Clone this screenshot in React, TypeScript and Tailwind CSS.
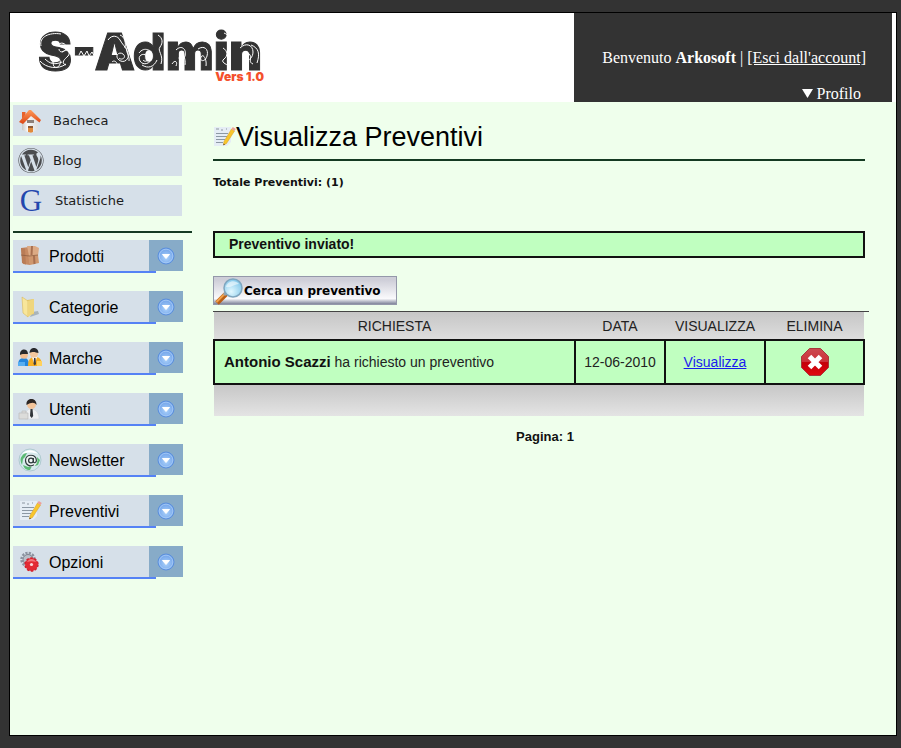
import { FaWordpress } from "react-icons/fa";
import type { ReactNode } from "react";

const sans = "font-['Liberation_Sans',Arial,sans-serif]";
const verdana = "font-['DejaVu_Sans',Verdana,sans-serif]";

function HomeIcon() {
  return (
    <svg width="24" height="24" viewBox="0 0 24 24" aria-hidden="true">
      <defs>
        <linearGradient id="roof" x1="0" y1="0" x2="0" y2="1">
          <stop offset="0" stopColor="#ff9a5a" />
          <stop offset="1" stopColor="#dc4412" />
        </linearGradient>
        <linearGradient id="wall" x1="0" y1="0" x2="1" y2="0">
          <stop offset="0" stopColor="#c9c7c4" />
          <stop offset=".35" stopColor="#f8f8f8" />
          <stop offset="1" stopColor="#dedede" />
        </linearGradient>
      </defs>
      <path d="M3 12 11 4l8 7v9.500L12 24l-9-3z" fill="url(#wall)" />
      <path d="M3 3h3.500v6H3z" fill="#e8622c" />
      <path d="M0 13 10 1h2l10 10-1.500 2.500L12 7l-8 8z" fill="url(#roof)" />
      <path d="M8 11h7v3H8z" fill="#8d8079" />
      <path d="M9 17h5v6l-2 .700-3-.7z" fill="#e08a3c" />
      <path d="M9 17h5v2H9z" fill="#8f5a34" />
    </svg>
  );
}

function BoxIcon() {
  return (
    <svg width="22" height="22" viewBox="0 0 22 22" aria-hidden="true">
      <path d="M2 3l8-1 1 18-7-1z" fill="#c78a62" />
      <path d="M2 3l4 .500 1 16-4-1.500z" fill="#b97c56" />
      <path d="M8 1h8l4 2-1 8h-9z" fill="#dcaa84" />
      <path d="M9 11l10-1 1 8-9 2z" fill="#cf976e" />
      <path d="M12 1l2 0-.5 9h-2zM14 11l2-.200.500 8-2 .400z" fill="#a87050" />
      <path d="M2 10l8 1 9-1" fill="none" stroke="#8a5a3e" strokeWidth=".7" />
    </svg>
  );
}

function FolderIcon() {
  return (
    <svg width="22" height="22" viewBox="0 0 22 22" aria-hidden="true">
      <path d="M13 16l6-1 1 3-9 3z" fill="#a9b4ba" />
      <path d="M8 4l7-1v15l-7 1z" fill="#e2c566" />
      <path d="M3 1l6 4v16l-5-4z" fill="#f8e69a" stroke="#d8b95a" strokeWidth=".6" />
      <path d="M9 5l6-2v14l-6 4z" fill="#efd67e" />
    </svg>
  );
}

function PeopleIcon() {
  return (
    <svg width="26" height="20" viewBox="0 0 26 20" aria-hidden="true">
      <path d="M1 18c0-6 2-8 6-8s5 3 5 8z" fill="#2385dc" />
      <circle cx="7" cy="7" r="3.800" fill="#f1bd91" />
      <path d="M3 7c-.5-7 8-7 8-1-3 .500-5-1-8 1z" fill="#28292c" />
      <path d="M11 18c0-6 2-9 7-9s7 3 7 9z" fill="#f6ae22" />
      <path d="M15 9h5l-2.500 8z" fill="#fff" />
      <path d="M17 10h1.500l.500 6-1.200 1.500L16.500 16z" fill="#3c3c3c" />
      <circle cx="17" cy="5.500" r="4.200" fill="#f3c79d" />
      <path d="M12.500 5c0-7 9-6.500 9 0-3-.5-5-2-9 0z" fill="#28292c" />
      <path d="M1 14h7v4H1z" fill="#56aef2" />
      <path d="M20 13h5v5h-5z" fill="#ffd15c" />
    </svg>
  );
}

function UserIcon() {
  return (
    <svg width="24" height="22" viewBox="0 0 24 22" aria-hidden="true">
      <path d="M7 21c0-7 2-10 6-10s8 3 8 10z" fill="#eef0f2" stroke="#ccd0d4" strokeWidth=".5" />
      <path d="M12.500 11h2l.700 7-1.500 2-1.700-2z" fill="#33363a" />
      <circle cx="13.500" cy="6.500" r="4.500" fill="#f3c49a" />
      <path d="M8.500 7C7.500-1 19-1 18.500 7c-2-3-5-3-10 0z" fill="#2c2624" />
      <path d="M1 15h9v6H1zM4 15v-2h4v2" fill="#dcdcda" stroke="#bbb" strokeWidth=".7" />
    </svg>
  );
}

function MailIcon() {
  return (
    <svg width="24" height="24" viewBox="0 0 24 24" aria-hidden="true">
      <circle cx="12" cy="12" r="11" fill="#d5e9ec" stroke="#9dbdc3" strokeWidth=".7" />
      <path d="M4 8c1-2 3-3 5-3l-2 4-2 2-1 6C2 13 2 10 4 8zM19 9l3 3-2 5-3 1zM5 17l5 2 4-1-2 4C8 22 6 20 5 17z" fill="#5cba74" />
      <path d="M4 6c4-5 12-5 16 0-5-2-11-2-16 0z" fill="#fff" />
      <circle cx="13" cy="12.500" r="6.500" fill="#f2f5f5" opacity=".85" />
      <circle cx="13" cy="12.500" r="2.400" fill="none" stroke="#303c3e" strokeWidth="1.300" />
      <path d="M15.400 10v3.500c0 2 3 1.500 3-1 0-7-10.900-7-10.900 0 0 5 5 6.500 8.500 4.300" fill="none" stroke="#303c3e" strokeWidth="1.200" />
    </svg>
  );
}

function NoteIcon() {
  return (
    <svg width="23" height="22" viewBox="0 0 23 22" aria-hidden="true">
      <path d="M1 1h17v15l-4 4H1z" fill="#e5edf5" />
      <path d="M3 3h3M8 4h2M13 3h1" stroke="#8b95a0" />
      <path d="M3 7.500h12M3 10.500h11M3 13.500h9M3 16.500h7" stroke="#8c98a4" strokeWidth="1.100" />
      <path d="M18.500 3l3 2-8 12.500-3 1.500.500-3.500z" fill="#f8c62c" stroke="#d89c1c" strokeWidth=".5" />
      <path d="M18.500 3l1.300-2 3 2-1.300 2z" fill="#eda09a" />
      <path d="M10.600 17.500l-.2 1.700 1.600-.8z" fill="#4d3c26" />
    </svg>
  );
}

function GearIcon() {
  return (
    <svg width="22" height="22" viewBox="0 0 22 22" aria-hidden="true">
      <circle cx="9" cy="8.500" r="6.500" fill="none" stroke="#8c93a0" strokeWidth="2.500" strokeDasharray="2.200 1.200" />
      <circle cx="9" cy="8.500" r="5" fill="#b9bec8" stroke="#7c828e" />
      <circle cx="12.500" cy="13.500" r="6.400" fill="#e32a34" />
      <circle cx="12.500" cy="13.500" r="6.500" fill="none" stroke="#d31f2b" strokeWidth="1.400" strokeDasharray="2.500 1.580" />
      <path d="M8 11c2-4 7-4 9 0-3-1-6-1-9 0z" fill="#f4777c" />
      <circle cx="12.500" cy="13.500" r="1.600" fill="#f9dadb" />
    </svg>
  );
}

function ArrowIcon() {
  return (
    <svg width="18" height="18" viewBox="0 0 18 18" aria-hidden="true">
      <defs>
        <radialGradient id="orb" cx=".5" cy=".6" r=".6">
          <stop offset="0" stopColor="#a9d0fa" />
          <stop offset="1" stopColor="#6c9fe8" />
        </radialGradient>
      </defs>
      <circle cx="9" cy="9" r="8" fill="url(#orb)" stroke="#5b8fdc" />
      <circle cx="9" cy="9" r="6.800" fill="none" stroke="#a8cbf6" strokeWidth=".8" />
      <path d="M5.500 7.500h7L9 11.500z" fill="#fff" stroke="#fff" strokeLinejoin="round" />
    </svg>
  );
}

function LensIcon() {
  return (
    <svg width="30" height="28" viewBox="0 0 30 28" aria-hidden="true">
      <defs>
        <radialGradient id="lens" cx=".4" cy=".7" r=".7">
          <stop offset="0" stopColor="#e2f8ff" />
          <stop offset="1" stopColor="#83c8ea" />
        </radialGradient>
      </defs>
      <path d="M3 26l9-9" stroke="#b95f17" strokeWidth="5" />
      <path d="M2.500 25l9-9" stroke="#f0a04a" strokeWidth="2" />
      <path d="M10 18l3-3" stroke="#9aa2aa" strokeWidth="3" />
      <circle cx="19" cy="11" r="9" fill="url(#lens)" stroke="#7fa6bf" strokeWidth="1.500" />
      <path d="M12 10c1-6 9-8 13-3-4 0-8 4-13 3z" fill="#fff" opacity=".55" />
    </svg>
  );
}

function DeleteIcon() {
  return (
    <svg width="28" height="28" viewBox="0 0 28 28" aria-hidden="true">
      <defs>
        <linearGradient id="stop" x1="0" y1="0" x2="0" y2="1">
          <stop offset="0" stopColor="#cc4a50" />
          <stop offset=".5" stopColor="#cc3038" />
          <stop offset=".52" stopColor="#c40008" />
          <stop offset="1" stopColor="#e00810" />
        </linearGradient>
      </defs>
      <path d="M8.500.500h11l8 8v11l-8 8h-11l-8-8v-11z" fill="url(#stop)" stroke="#a8383c" />
      <path d="M8.500 8.500l11 11M19.500 8.500l-11 11" stroke="#fff" strokeWidth="5" />
    </svg>
  );
}

function Swirls() {
  return (
    <svg className="absolute inset-0" width="226" height="46" viewBox="0 0 226 46" fill="none" stroke="#fff" strokeWidth="1" aria-hidden="true">
      <path d="M3 16c-2-9 8-14 20-12M2 31c6 7 18 9 26 3M14 33c2-7 10-5 8 1s-9 3-6-2M19 16c3-5 10-3 9 2s-7 5-7 1M24 22c6-4 9 1 6 4s-8 7-2 9M7 29c5 5 10 6 17 3" />
      <path d="M41 25l2-4 3 5 3-5 2 5 3-4 3 5" />
      <path d="M70 10c4-6 10-4 12 0s6 7 8 13-4 11-9 7 0-9 4-6-1 7-4 4M90 16c-4 5 2 9 1 15M74 32c3-3 7 2 4 5M82 5c5 2 6 8 5 13" />
      <path d="M101 23c5-7 14-3 13 4s-9 9-12 4 3-9 7-5-2 7-4 4M120 5c5 3 5 8 2 12s4 8 1 17M104 35c6 4 12 2 15-5" />
      <path d="M138 20c6-6 11 0 9 6s-8 4-5 0 6 3 5 9M160 19c6-4 11 0 9 7s-8 5-6 1 6 2 5 9M134 34c3-5 6-2 4 2" />
      <path d="M186 3c5 2 6 5 2 7M185 18c5 3 5 8 1 11s2 5 5 7M202 18c6-6 13-3 13 4s-7 11-9 6 4-7 6-3-2 7 3 9M213 15c8 3 9 9 6 18" />
    </svg>
  );
}

const quickLinks: { label: string; icon: ReactNode; gap: string }[] = [
  { label: "Bacheca", icon: <HomeIcon />, gap: "gap-[9px]" },
  { label: "Blog", icon: <FaWordpress size={27} className="text-[#4b4d50]" />, gap: "gap-[9px]" },
  {
    label: "Statistiche",
    icon: <span className="font-['Liberation_Serif',serif] text-[31px] leading-none text-[#2347ad]">G</span>,
    gap: "gap-[11px]",
  },
];

const menu: { label: string; icon: ReactNode }[] = [
  { label: "Prodotti", icon: <BoxIcon /> },
  { label: "Categorie", icon: <FolderIcon /> },
  { label: "Marche", icon: <PeopleIcon /> },
  { label: "Utenti", icon: <UserIcon /> },
  { label: "Newsletter", icon: <MailIcon /> },
  { label: "Preventivi", icon: <NoteIcon /> },
  { label: "Opzioni", icon: <GearIcon /> },
];

function Header() {
  return (
    <header className="flex h-[89px] justify-between bg-white pr-1">
      <div className="ml-[28px] mt-[17px] flex w-[226px] flex-col">
        <div className="relative h-[40px]">
          <span className="block font-['Inter',sans-serif] text-[51px] leading-[44px] font-black text-[#333] [-webkit-text-stroke:1px_#333]">S-Admin</span>
          <Swirls />
        </div>
        <span className="self-end font-['Inter',sans-serif] text-[12px] leading-[14px] font-black text-[#f4502c]">Vers 1.0</span>
      </div>
      <div className="flex w-[318px] flex-col items-end bg-[#333] font-['Liberation_Serif',serif] text-base leading-5 text-white">
        <p className="mt-[35px] mr-[26px]">
          Benvenuto <b>Arkosoft</b> | <a href="#esci" className="underline">[Esci dall'account]</a>
        </p>
        <button type="button" className="mt-[17px] mr-[31px] flex h-[17px] items-center gap-1">
          <svg width="11" height="9" viewBox="0 0 11 9" aria-hidden="true">
            <path d="M0 0h11L5.500 9z" fill="#fff" />
          </svg>
          Profilo
        </button>
      </div>
    </header>
  );
}

function Sidebar() {
  return (
    <nav className="w-[182px] shrink-0 pt-[3px] pl-[3px]">
      <ul className={`flex flex-col gap-[9px] ${verdana} text-[13px] text-[#1c1c1c]`}>
        {quickLinks.map((item) => (
          <li key={item.label}>
            <a href="#" className={`flex h-[31px] w-[169px] items-center bg-[#d6e0e9] pl-[5px] ${item.gap}`}>
              <span className="flex w-[26px] justify-center">{item.icon}</span>
              {item.label}
            </a>
          </li>
        ))}
      </ul>
      <hr className="mt-[15px] mb-[7px] border-t-2 border-[#153a22]" />
      <ul className={`flex flex-col gap-[18px] ${sans} text-base text-black`}>
        {menu.map((item) => (
          <li key={item.label} className="h-[33px]">
            <button type="button" className="flex h-[31px] w-[170px] items-center bg-[#d6e0e9]">
              <span className="flex w-9 justify-center pr-[2px]">{item.icon}</span>
              <span className="flex-1 pt-[2px] text-left">{item.label}</span>
              <span className="flex h-full w-[34px] items-center justify-center bg-[#87abc8]">
                <ArrowIcon />
              </span>
            </button>
            <div className="h-[2px] w-[143px] bg-[#5582f5]" />
          </li>
        ))}
      </ul>
    </nav>
  );
}

function Requests() {
  return (
    <div className="mt-[6px] border-t border-[#444] pr-1">
      <table className="w-full table-fixed border-collapse text-sm text-[#222]">
        <colgroup>
          <col />
          <col className="w-[90px]" />
          <col className="w-[100px]" />
          <col className="w-[99px]" />
        </colgroup>
        <thead>
          <tr className="h-7 bg-linear-to-b from-[#c6c6c6] to-[#dedede]">
            <th className="font-normal">RICHIESTA</th>
            <th className="font-normal">DATA</th>
            <th className="font-normal">VISUALIZZA</th>
            <th className="font-normal">ELIMINA</th>
          </tr>
        </thead>
        <tbody>
          <tr className="h-11 bg-[#c0ffc0] text-center">
            <td className="border-2 border-[#111] pl-[9px] text-left">
              <b className="text-[15px] text-[#111]">Antonio Scazzi</b> ha richiesto un preventivo
            </td>
            <td className="border-2 border-[#111]">12-06-2010</td>
            <td className="border-2 border-[#111]">
              <a href="#visualizza" className="text-[#1a1aee] underline">Visualizza</a>
            </td>
            <td className="border-2 border-[#111]">
              <button type="button" aria-label="Elimina" className="mx-auto block">
                <DeleteIcon />
              </button>
            </td>
          </tr>
        </tbody>
        <tfoot>
          <tr className="h-8 bg-linear-to-b from-[#c6c6c6] to-[#e4e4e4]">
            <td colSpan={4} />
          </tr>
        </tfoot>
      </table>
    </div>
  );
}

export default function App() {
  return (
    <div className="flex min-h-screen flex-col bg-[#333] pt-3 pr-1 pb-3 pl-[9px]">
      <div className="flex flex-1 flex-col border border-black bg-[#efffec]">
        <Header />
        <div className="flex flex-1">
          <Sidebar />
          <main className={`min-w-0 flex-1 pt-[17px] pr-[27px] pl-[21px] ${sans}`}>
            <div className="mr-1 flex h-[42px] items-start border-b-2 border-[#153a22] pb-1">
              <span className="pt-[7px]"><NoteIcon /></span>
              <h1 className="text-[27px] leading-9 text-black">Visualizza Preventivi</h1>
            </div>
            <p className={`mt-[14px] ${verdana} text-[11px] leading-4 font-bold text-[#111]`}>Totale Preventivi: (1)</p>
            <div role="status" className="mt-10 mr-1 flex h-[27px] items-center border-2 border-[#111] bg-[#c0ffc0] pb-[2px] pl-[14px] text-sm font-bold text-[#111]">
              Preventivo inviato!
            </div>
            <button
              type="button"
              className={`mt-[18px] flex h-[29px] w-[184px] items-center border border-[#9498aa] bg-linear-to-b from-[#ceced8] from-10% via-[#fafafc] via-80% to-[#80859a] ${verdana} text-[12px] font-bold whitespace-nowrap text-black`}
            >
              <LensIcon />
              Cerca un preventivo
            </button>
            <Requests />
            <p className="mt-[11px] pl-2 text-center text-[13px] leading-5 font-bold text-[#111]">Pagina: 1</p>
          </main>
        </div>
      </div>
    </div>
  );
}
